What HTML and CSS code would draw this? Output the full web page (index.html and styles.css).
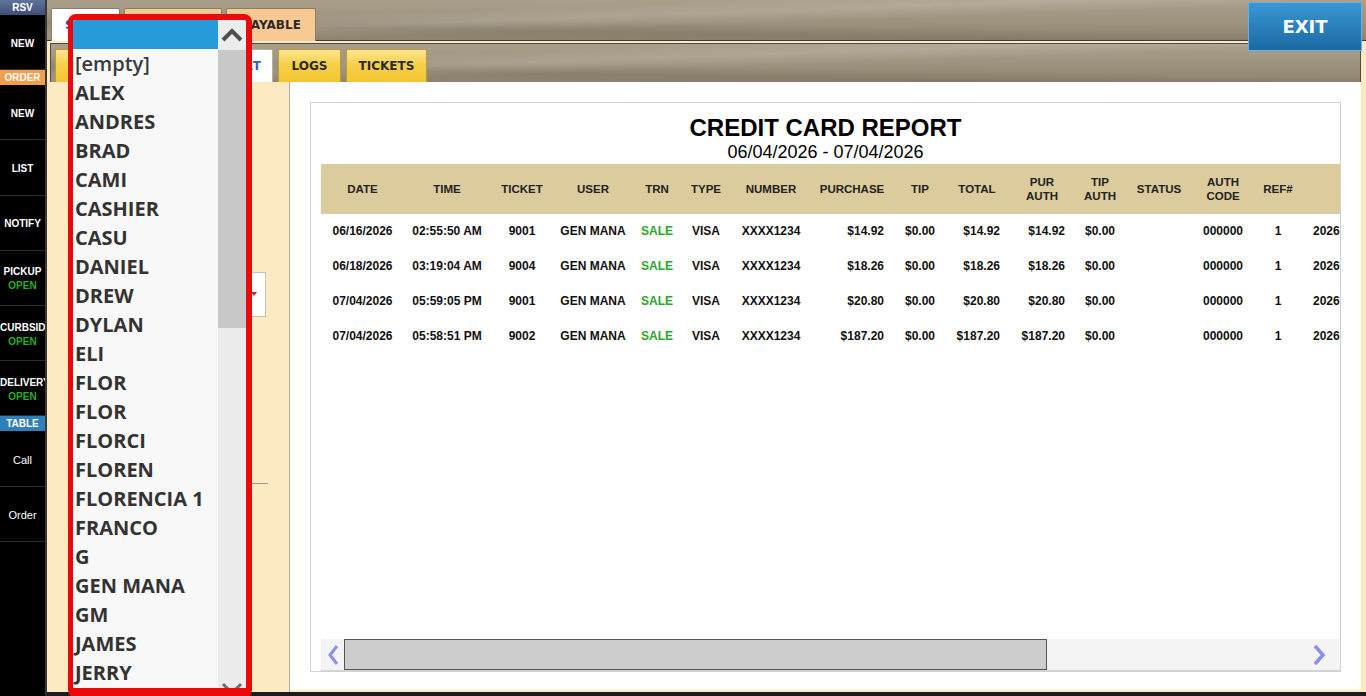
FILE: index.html
```html
<!DOCTYPE html>
<html>
<head>
<meta charset="utf-8">
<title>Credit Card Report</title>
<link rel="stylesheet" href="styles.css">
</head>
<body>
<nav class="sidebar">
  <div class="sec sec-rsv">RSV</div>
  <div class="item"><span>NEW</span></div>
  <div class="sec sec-order">ORDER</div>
  <div class="item"><span>NEW</span></div>
  <div class="item"><span>LIST</span></div>
  <div class="item"><span>NOTIFY</span></div>
  <div class="item"><span>PICKUP</span><span class="open">OPEN</span></div>
  <div class="item"><span>CURBSIDE</span><span class="open">OPEN</span></div>
  <div class="item"><span>DELIVERY</span><span class="open">OPEN</span></div>
  <div class="sec sec-table">TABLE</div>
  <div class="item light"><span>Call</span></div>
  <div class="item light"><span>Order</span></div>
</nav>

<div class="app">
  <header class="topbar">
    <div class="ttab ttab-white">SALES</div>
    <div class="ttab ttab-orange"></div>
    <div class="ttab ttab-orange">PAYABLE</div>
  </header>
  <button class="exit">EXIT</button>

  <div class="subbar">
    <div class="stab stab-a"></div>
    <div class="stab stab-active">REPORT</div>
    <div class="stab stab-logs">LOGS</div>
    <div class="stab stab-tickets">TICKETS</div>
  </div>

  <main class="content">
    <aside class="filters">
      <div class="fbox"><span class="fmark"></span></div>
      <div class="fline"></div>
    </aside>
    <section class="panel">
      <div class="report">
        <h1 class="title">CREDIT CARD REPORT</h1>
        <div class="range">06/04/2026 - 07/04/2026</div>
        <div class="tablewrap">
          <table class="cc">
            <colgroup>
              <col class="c-date"><col class="c-time"><col class="c-ticket"><col class="c-user">
              <col class="c-trn"><col class="c-type"><col class="c-number"><col class="c-purchase">
              <col class="c-tip"><col class="c-total"><col class="c-purauth"><col class="c-tipauth">
              <col class="c-status"><col class="c-auth"><col class="c-ref"><col class="c-settle">
            </colgroup>
            <thead>
              <tr>
                <th>DATE</th><th>TIME</th><th>TICKET</th><th>USER</th><th>TRN</th><th>TYPE</th><th>NUMBER</th>
                <th>PURCHASE</th><th>TIP</th><th>TOTAL</th><th>PUR<br>AUTH</th><th>TIP<br>AUTH</th>
                <th>STATUS</th><th>AUTH<br>CODE</th><th>REF#</th><th></th>
              </tr>
            </thead>
            <tbody>
              <tr>
                <td>06/16/2026</td><td>02:55:50 AM</td><td>9001</td><td>GEN MANA</td><td class="sale">SALE</td><td>VISA</td><td>XXXX1234</td>
                <td class="r-purchase">$14.92</td><td>$0.00</td><td class="r-total">$14.92</td><td class="r-purauth">$14.92</td><td>$0.00</td>
                <td></td><td>000000</td><td>1</td><td class="settle">2026</td>
              </tr>
              <tr>
                <td>06/18/2026</td><td>03:19:04 AM</td><td>9004</td><td>GEN MANA</td><td class="sale">SALE</td><td>VISA</td><td>XXXX1234</td>
                <td class="r-purchase">$18.26</td><td>$0.00</td><td class="r-total">$18.26</td><td class="r-purauth">$18.26</td><td>$0.00</td>
                <td></td><td>000000</td><td>1</td><td class="settle">2026</td>
              </tr>
              <tr>
                <td>07/04/2026</td><td>05:59:05 PM</td><td>9001</td><td>GEN MANA</td><td class="sale">SALE</td><td>VISA</td><td>XXXX1234</td>
                <td class="r-purchase">$20.80</td><td>$0.00</td><td class="r-total">$20.80</td><td class="r-purauth">$20.80</td><td>$0.00</td>
                <td></td><td>000000</td><td>1</td><td class="settle">2026</td>
              </tr>
              <tr>
                <td>07/04/2026</td><td>05:58:51 PM</td><td>9002</td><td>GEN MANA</td><td class="sale">SALE</td><td>VISA</td><td>XXXX1234</td>
                <td class="r-purchase">$187.20</td><td>$0.00</td><td class="r-total">$187.20</td><td class="r-purauth">$187.20</td><td>$0.00</td>
                <td></td><td>000000</td><td>1</td><td class="settle">2026</td>
              </tr>
            </tbody>
          </table>
        </div>
        <div class="hscroll">
          <span class="harrow">
            <svg width="14" height="22" viewBox="0 0 14 22"><polyline points="11,2 4,11 11,20" fill="none" stroke="#8d8cf0" stroke-width="3"/></svg>
          </span>
          <div class="hthumb"></div>
          <span class="hspace"></span>
          <span class="harrow harrow-right">
            <svg width="16" height="22" viewBox="0 0 16 22"><polyline points="4,2 12,11 4,20" fill="none" stroke="#8d8cf0" stroke-width="3.5"/></svg>
          </span>
        </div>
      </div>
    </section>
  </main>
</div>

<div class="dropdown">
  <ul class="dlist">
    <li class="sel"></li>
    <li class="empty">[empty]</li>
    <li>ALEX</li>
    <li>ANDRES</li>
    <li>BRAD</li>
    <li>CAMI</li>
    <li>CASHIER</li>
    <li>CASU</li>
    <li>DANIEL</li>
    <li>DREW</li>
    <li>DYLAN</li>
    <li>ELI</li>
    <li>FLOR</li>
    <li>FLOR</li>
    <li>FLORCI</li>
    <li>FLOREN</li>
    <li>FLORENCIA 1</li>
    <li>FRANCO</li>
    <li>G</li>
    <li>GEN MANA</li>
    <li>GM</li>
    <li>JAMES</li>
    <li>JERRY</li>
  </ul>
  <div class="dscroll">
    <div class="dbtn">
      <svg width="24" height="16" viewBox="0 0 24 16"><polyline points="3,13 12,4 21,13" fill="none" stroke="#505050" stroke-width="4"/></svg>
    </div>
    <div class="dthumb"></div>
    <div class="dtrack"></div>
    <div class="dbtn">
      <svg width="24" height="16" viewBox="0 0 24 16"><polyline points="3,3 12,12 21,3" fill="none" stroke="#707070" stroke-width="3"/></svg>
    </div>
  </div>
</div>
</body>
</html>
```
FILE: styles.css
```css
* { box-sizing: border-box; }
html, body { margin: 0; padding: 0; }
body {
  width: 1366px;
  height: 696px;
  overflow: hidden;
  background: #111;
  display: flex;
  position: relative;
  font-family: "Liberation Sans", Arial, sans-serif;
}

/* ---------- sidebar ---------- */
.sidebar {
  width: 45px;
  flex: none;
  background: #000;
  color: #fff;
  font-weight: bold;
  font-size: 10px;
}
.sec {
  height: 15px;
  line-height: 15px;
  text-align: center;
  color: #fff;
}
.sec-rsv { background: linear-gradient(#62739b, #3f4f76); }
.sec-order { background: #f39c4a; }
.sec-table { background: #2f80b8; }
.item {
  height: 55.2px;
  border-bottom: 1px solid #2e2e2e;
  display: flex;
  flex-direction: column;
  justify-content: center;
  overflow: hidden;
  line-height: 14px;
  padding-top: 3px;
}
.item span {
  display: block;
  text-align: center;
  white-space: nowrap;
}
.item .open { color: #23b023; }
.item.light { font-weight: normal; font-size: 11px; }

/* ---------- app frame ---------- */
.app {
  flex: 1;
  min-width: 0;
  position: relative;
  display: flex;
  flex-direction: column;
  background: #fcebc2;
  border-left: 2px solid #3a3a3a;
  border-bottom: 4px solid #1c1c1c;
}
.topbar, .subbar {
  background:
    linear-gradient(178deg, rgba(255,255,255,0) 28%, rgba(255,255,255,.13) 42%, rgba(255,255,255,0) 56%),
    linear-gradient(181deg, rgba(0,0,0,0) 55%, rgba(0,0,0,.08) 72%, rgba(0,0,0,0) 88%),
    linear-gradient(#aa9f8b, #9e937f 50%, #8f846f);
}
.topbar {
  height: 41px;
  flex: none;
  display: flex;
  align-items: flex-end;
  gap: 4px;
  padding-left: 4px;
  border-bottom: 1px solid #3c3c3c;
  margin-bottom: 2px;
}
.ttab {
  height: 33px;
  margin-bottom: -1px;
  font-family: "DejaVu Sans", Verdana, sans-serif;
  font-weight: bold;
  font-size: 12px;
  color: #2a2a2a;
  display: flex;
  align-items: center;
  justify-content: center;
  border: 1px solid #8a7e68;
  border-bottom: none;
  border-radius: 2px 2px 0 0;
}
.ttab-white { width: 69px; background: #fff; color: #3d3fa8; justify-content: flex-start; padding-left: 13px; }
.ttab-orange { background: #f9c993; }
.ttab-orange:nth-child(2) { width: 98px; }
.ttab-orange:nth-child(3) { width: 90px; padding-left: 2px; }

.exit {
  position: absolute;
  top: 2px;
  left: 1201px;
  width: 114px;
  height: 49px;
  border: 1px solid #6cb0de;
  background: linear-gradient(#3a97d2, #1b69a4);
  color: #fff;
  font-family: "DejaVu Sans", Verdana, sans-serif;
  font-weight: bold;
  font-size: 18px;
  padding: 0;
  margin: 0;
}

.subbar {
  height: 39px;
  flex: none;
  margin: 0 5px 0 3px;
  border: 1px solid #4a4a4a;
  border-bottom: none;
  display: flex;
  align-items: flex-end;
  padding-left: 4px;
}
.stab {
  height: 33px;
  font-family: "DejaVu Sans", Verdana, sans-serif;
  font-weight: bold;
  font-size: 12px;
  color: #2a2a2a;
  display: flex;
  align-items: center;
  justify-content: center;
  background: linear-gradient(#fde690, #f7d04a 45%, #f3c530);
  border: 1px solid #b89a40;
  border-bottom: none;
  border-radius: 2px 2px 0 0;
}
.stab-a { width: 95px; }
.stab-active {
  width: 119px;
  margin-left: 4px;
  background: #fff;
  color: #3a5db8;
  border-color: #b9b09a;
  justify-content: flex-end;
  padding-right: 11px;
}
.stab-logs { width: 63px; margin-left: 5px; }
.stab-tickets { width: 81px; margin-left: 5px; }

/* ---------- content ---------- */
.content {
  flex: 1;
  display: flex;
  min-height: 0;
  min-width: 0;
}
.filters {
  width: 243px;
  flex: none;
  border-right: 1px solid #b4b0a4;
  display: flex;
  flex-direction: column;
}
.fbox {
  width: 86px;
  height: 45px;
  margin: 190px 0 0 133px;
  background: #fff;
  border: 1px solid #c8c3b5;
  position: relative;
}
.fmark {
  position: absolute;
  left: 70px;
  top: 19px;
  width: 0;
  height: 0;
  border-left: 3px solid transparent;
  border-right: 3px solid transparent;
  border-top: 4px solid #d02020;
}
.fline {
  width: 168px;
  height: 1px;
  background: #9a9a9a;
  margin: 166px 0 0 53px;
}
.panel {
  flex: 1;
  min-width: 0;
  background: #fff;
  margin: 0 5px 2px 0;
  padding: 20px 20px 18px 20px;
  display: flex;
}
.report {
  flex: 1;
  border: 1px solid #d2d2d2;
  display: flex;
  flex-direction: column;
  min-width: 0;
  overflow: hidden;
}
.title {
  margin: 0;
  padding-top: 11px;
  text-align: center;
  font-size: 24px;
  line-height: 28px;
  font-weight: bold;
  color: #000;
}
.range {
  text-align: center;
  font-size: 18px;
  line-height: 21px;
  color: #000;
}
.tablewrap {
  flex: 1;
  min-width: 0;
  margin: 1px 0 0 10px;
  overflow: hidden;
}
.cc {
  border-collapse: collapse;
  table-layout: fixed;
  width: 1165px;
}
.c-date { width: 83px; }
.c-time { width: 86px; }
.c-ticket { width: 64px; }
.c-user { width: 78px; }
.c-trn { width: 50px; }
.c-type { width: 48px; }
.c-number { width: 82px; }
.c-purchase { width: 80px; }
.c-tip { width: 56px; }
.c-total { width: 58px; }
.c-purauth { width: 72px; }
.c-tipauth { width: 44px; }
.c-status { width: 74px; }
.c-auth { width: 54px; }
.c-ref { width: 56px; }
.c-settle { width: 180px; }
.cc th {
  background: #dccb9c;
  height: 50px;
  padding: 0;
  font-size: 11.5px;
  line-height: 14px;
  font-weight: bold;
  color: #222;
  text-align: center;
  vertical-align: middle;
  white-space: nowrap;
  overflow: hidden;
}
.cc td {
  height: 35px;
  padding: 0 0 1px 0;
  font-size: 12px;
  font-weight: bold;
  color: #111;
  text-align: center;
  vertical-align: middle;
  white-space: nowrap;
  overflow: hidden;
}
.cc td.sale { color: #2aa82a; }
.cc td.r-purchase { text-align: right; padding-right: 8px; }
.cc td.r-total { text-align: right; padding-right: 6px; }
.cc td.r-purauth { text-align: right; padding-right: 13px; }
.cc td.settle { text-align: left; padding-left: 7px; }

.hscroll {
  height: 32px;
  flex: none;
  margin-left: 10px;
  background: #f4f4f4;
  border-bottom: 1px solid #d4d4d4;
  display: flex;
  align-items: center;
}
.harrow {
  width: 23px;
  height: 30px;
  display: flex;
  align-items: center;
  justify-content: center;
  flex: none;
}
.harrow-right { margin-right: 10px; }
.hthumb {
  width: 703px;
  height: 31px;
  background: #cdcdcd;
  border: 1px solid #555;
  flex: none;
  align-self: flex-start;
}
.hspace { flex: 1; }

/* ---------- dropdown overlay ---------- */
.dropdown {
  position: absolute;
  left: 68px;
  top: 14px;
  width: 184px;
  height: 684px;
  border-style: solid;
  border-color: #ea0a0a;
  border-width: 6px 6px 10px 5px;
  border-radius: 8px;
  background: #f8f8f8;
  display: flex;
  overflow: hidden;
}
.dlist {
  list-style: none;
  margin: 0;
  padding: 0;
  width: 145px;
  flex: none;
  overflow: hidden;
  font-family: "Open Sans", "Noto Sans", sans-serif;
  font-weight: bold;
  font-size: 20px;
  color: #333;
}
.dlist li {
  height: 29px;
  line-height: 30px;
  padding-left: 2px;
  white-space: nowrap;
}
.dlist li.sel { background: #279bda; }
.dlist li.empty { font-weight: 600; color: #3a3a3a; }
.dscroll {
  width: 28px;
  flex: none;
  display: flex;
  flex-direction: column;
  height: 684px;
  background: #ececec;
}
.dbtn {
  height: 30px;
  flex: none;
  display: flex;
  align-items: center;
  justify-content: center;
}
.dthumb {
  height: 278px;
  flex: none;
  background: #c8c8c8;
}
.dtrack { flex: 1; }
```
